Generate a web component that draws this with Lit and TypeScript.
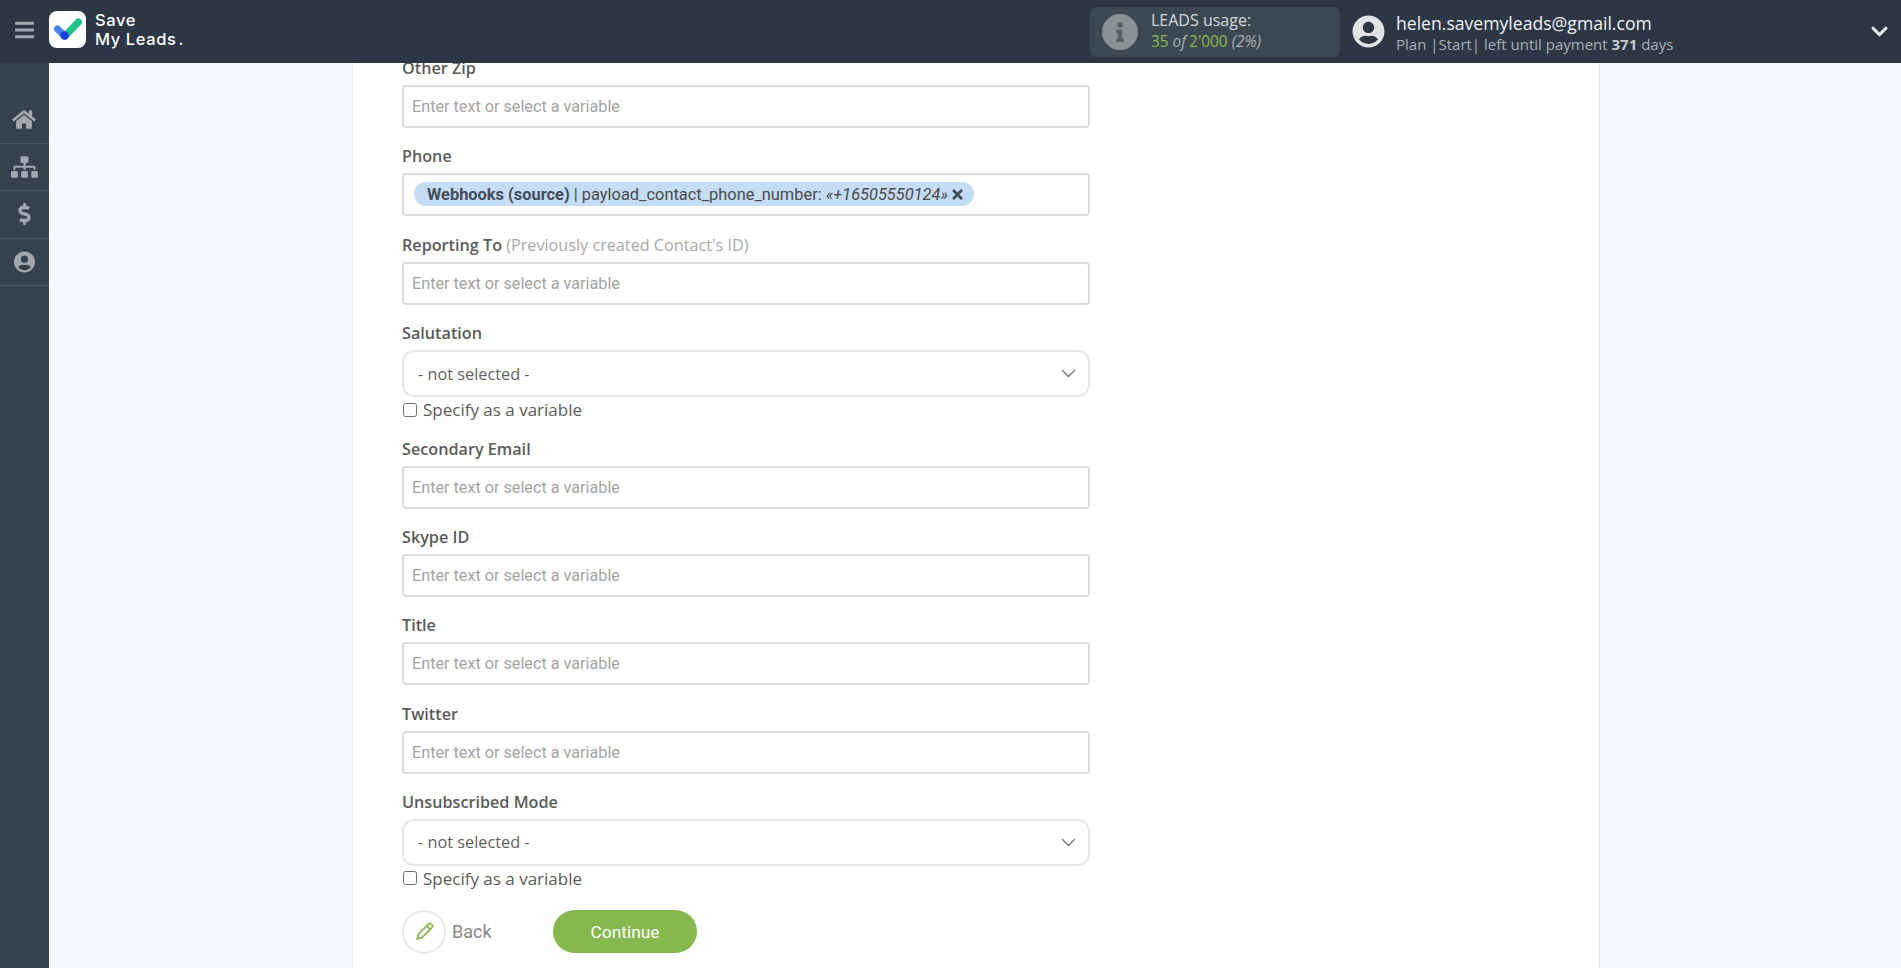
import { LitElement, html, css, svg } from "lit";
import { customElement } from "lit/decorators.js";

const icon = (vb: string, d: string, cls = "") =>
  html`<svg class=${cls} viewBox=${vb} fill="currentColor">${svg`<path d=${d}></path>`}</svg>`;

const HOME = "M280.37 148.26L96 300.11V464a16 16 0 0 0 16 16l112.06-.29a16 16 0 0 0 15.92-16V368a16 16 0 0 1 16-16h64a16 16 0 0 1 16 16v95.64a16 16 0 0 0 16 16.05L464 480a16 16 0 0 0 16-16V300L295.67 148.26a12.19 12.19 0 0 0-15.3 0zM571.6 251.47L488 182.56V44.05a12 12 0 0 0-12-12h-56a12 12 0 0 0-12 12v72.61L318.47 43a48 48 0 0 0-61 0L4.34 251.47a12 12 0 0 0-1.6 16.9l25.5 31A12 12 0 0 0 45.15 301l235.22-193.74a12.19 12.19 0 0 1 15.3 0L530.9 301a12 12 0 0 0 16.9-1.6l25.5-31a12 12 0 0 0-1.7-16.93z";
const SITEMAP = "M128 352H32c-17.67 0-32 14.33-32 32v96c0 17.67 14.33 32 32 32h96c17.67 0 32-14.33 32-32v-96c0-17.67-14.33-32-32-32zm-24-80h192v48h48v-48h192v48h48v-57.59c0-21.17-17.23-38.41-38.41-38.41H344v-64h40c17.67 0 32-14.33 32-32V32c0-17.67-14.33-32-32-32H256c-17.67 0-32 14.33-32 32v96c0 17.67 14.33 32 32 32h40v64H94.41C73.23 224 56 241.23 56 262.41V320h48v-48zm264 80h-96c-17.67 0-32 14.33-32 32v96c0 17.67 14.33 32 32 32h96c17.67 0 32-14.33 32-32v-96c0-17.67-14.33-32-32-32zm240 0h-96c-17.67 0-32 14.33-32 32v96c0 17.67 14.33 32 32 32h96c17.67 0 32-14.33 32-32v-96c0-17.67-14.33-32-32-32z";
const DOLLAR = "M209.2 233.4l-108-31.6C88.7 198.2 80 186.5 80 173.5c0-16.3 13.2-29.5 29.5-29.5h66.3c12.2 0 24.2 3.7 34.2 10.5 6.1 4.1 14.3 3.1 19.5-2l34.8-34c7.1-6.9 6.1-18.4-1.8-24.5C238 74.8 207.4 64.1 176 64V16c0-8.8-7.2-16-16-16h-32c-8.8 0-16 7.2-16 16v48h-2.5C45.8 64-5.4 118.7.5 183.6c4.2 46.1 39.4 83.6 83.8 96.6l102.5 30c12.5 3.7 21.2 15.3 21.2 28.3 0 16.3-13.2 29.5-29.5 29.5h-66.3C100 368 88 364.3 78 357.5c-6.1-4.1-14.3-3.1-19.5 2l-34.8 34c-7.1 6.9-6.1 18.4 1.8 24.5 24.5 19.2 55.1 29.9 86.5 30v48c0 8.8 7.2 16 16 16h32c8.8 0 16-7.2 16-16v-48.2c46.6-.9 90.3-28.6 105.7-72.7 21.5-61.6-14.6-124.8-72.5-141.7z";
const USER = "M248 8C111 8 0 119 0 256s111 248 248 248 248-111 248-248S385 8 248 8zm0 96c48.6 0 88 39.4 88 88s-39.4 88-88 88-88-39.4-88-88 39.4-88 88-88zm0 344c-58.7 0-111.3-26.6-146.5-68.2 18.8-35.4 55.6-59.8 98.5-59.8 2.4 0 4.8.4 7.1 1.1 13 4.2 26.6 6.9 40.9 6.9 14.3 0 28-2.7 40.9-6.9 2.3-.7 4.7-1.1 7.1-1.1 42.9 0 79.7 24.4 98.5 59.8C359.3 421.4 306.7 448 248 448z";
const BARS = "M16 132h416c8.837 0 16-7.163 16-16V76c0-8.837-7.163-16-16-16H16C7.163 60 0 67.163 0 76v40c0 8.837 7.163 16 16 16zm0 160h416c8.837 0 16-7.163 16-16v-40c0-8.837-7.163-16-16-16H16c-8.837 0-16 7.163-16 16v40c0 8.837 7.163 16 16 16zm0 160h416c8.837 0 16-7.163 16-16v-40c0-8.837-7.163-16-16-16H16c-8.837 0-16 7.163-16 16v40c0 8.837 7.163 16 16 16z";
const INFO = "M20 424.229h20V279.771H20c-11.046 0-20-8.954-20-20V212c0-11.046 8.954-20 20-20h112c11.046 0 20 8.954 20 20v212.229h20c11.046 0 20 8.954 20 20V492c0 11.046-8.954 20-20 20H20c-11.046 0-20-8.954-20-20v-47.771c0-11.046 8.954-20 20-20zM96 0C56.235 0 24 32.235 24 72s32.235 72 72 72 72-32.235 72-72S135.764 0 96 0z";
const CHEVRON = "M207.029 381.476L12.686 187.132c-9.373-9.373-9.373-24.569 0-33.941l22.667-22.667c9.357-9.357 24.522-9.375 33.901-.04L224 284.505l154.745-154.021c9.379-9.335 24.544-9.317 33.901.04l22.667 22.667c9.373 9.373 9.373 24.569 0 33.941L240.971 381.476c-9.373 9.372-24.569 9.372-33.942 0z";
const TIMES = "M242.72 256l100.07-100.07c12.28-12.28 12.28-32.19 0-44.48l-22.24-22.24c-12.28-12.28-32.19-12.28-44.48 0L176 189.28 75.93 89.21c-12.28-12.28-32.19-12.28-44.48 0L9.21 111.45c-12.28 12.28-12.28 32.19 0 44.48L109.28 256 9.21 356.07c-12.28 12.28-12.28 32.19 0 44.48l22.24 22.24c12.28 12.28 32.2 12.28 44.48 0L176 322.72l100.07 100.07c12.28 12.28 32.2 12.28 44.48 0l22.24-22.24c12.28-12.28 12.28-32.19 0-44.48L242.72 256z";

@customElement("app-root")
export class AppRoot extends LitElement {
  static styles = css`
    :host { display: flex; flex-direction: column; height: 968px; overflow: hidden; font-family: "Open Sans", sans-serif; background: #f4f7fc; color: #555; }
    svg { display: block; }
    .header { flex: 0 0 63px; background: #2c3645; display: flex; align-items: center; color: #fff; }
    .burger { width: 19px; height: 22px; margin: 0 0 3px 15px; color: #a3a8ae; }
    .logo { width: 37px; height: 37px; margin: 0 0 4px 15px; background: #fff; border-radius: 8px; display: flex; align-items: center; justify-content: center; }
    .brand { margin: 0 0 4px 9px; font-family: Inter, sans-serif; font-weight: 500; font-size: 16.5px; line-height: 19px; letter-spacing: 0.6px; }
    .brand span { margin-left: 2px; }
    .usage { margin-left: auto; width: 250px; height: 50px; box-sizing: border-box; background: #3b4852; border-radius: 6px; display: flex; align-items: center; padding-left: 12px; }
    .info { width: 36px; height: 36px; border-radius: 50%; background: #8b9296; color: #565e68; display: flex; align-items: center; justify-content: center; }
    .info svg { width: 10px; height: 20px; }
    .usage-text { margin-left: 13px; font-size: 16px; line-height: 21px; color: #d6d9dc; margin-bottom: 2px; }
    .usage-text .line2 { font-size: 15.4px; }
    .usage-text .num { color: #8ab84d; }
    .usage-text i { color: #a9afb5; }
    .usage-text .of { margin-right: 3px; }
    .user { margin-left: 12px; display: flex; align-items: center; width: 549px; }
    .avatar { width: 33px; height: 33px; color: #e2e3e4; }
    .user-text { margin-left: 11px; }
    .email { font-size: 17.6px; line-height: 24px; color: #f0f1f2; margin-top: 1px; }
    .plan { font-size: 15px; line-height: 18px; color: #a9afb5; }
    .plan b { color: #c8cbce; font-weight: 700; }
    .caret { width: 17px; height: 19px; margin-left: auto; margin-right: 13px; color: #e2e4e6; }
    .body { flex: 1; display: flex; min-height: 0; }
    .side { flex: 0 0 49px; background: #364150; padding-top: 33px; box-sizing: border-box; color: #a3a8ae; }
    .side .item { height: 47.5px; box-sizing: border-box; border-bottom: 1px solid #4a5564; padding-right: 1px; display: flex; align-items: center; justify-content: center; }
    .side .home { width: 24px; height: 21px; }
    .side .map { width: 27px; height: 22px; }
    .side .usd { width: 13px; height: 22px; }
    .side .usr { width: 21px; height: 22px; }
    .main { flex: 1; min-width: 0; overflow: hidden; padding-left: 303px; padding-right: 301px; }
    .card { background: #fff; border-left: 1px solid #e8edf3; border-right: 1px solid #e3e8ef; height: 100%; box-sizing: border-box; padding-left: 49px; overflow: hidden; }
    .form { width: 688px; margin-top: -7px; }
    .field { margin-bottom: 16.35px; }
    label.lbl { display: block; font-size: 16.2px; font-weight: 600; line-height: 24px; margin-bottom: 5px; color: #5a5a5a; }
    label.lbl span { font-weight: 400; color: #a8a8a8; }
    .input { height: 43px; box-sizing: border-box; border: 2px solid #dcdcdc; border-radius: 4px; background: #fff; display: flex; align-items: center; padding-left: 8px; font-family: Roboto, sans-serif; font-size: 16.2px; color: #a3a3a3; }
    .chip { background: #c5dcf5; border-radius: 12px; height: 24px; display: inline-flex; align-items: center; padding: 0 11px 0 13px; margin: -1px 0 0 2px; color: #4a4a4a; white-space: nowrap; font-size: 16.4px; }
    .chip b { font-weight: 700; color: #444d5a; }
    .chip i { margin-left: 4px; }
    .chip svg { width: 11px; height: 15px; margin-left: 4px; color: #444d5a; }
    .select { height: 47px; box-sizing: border-box; border: 2px solid #e6e6e6; border-radius: 12px; background: #fff; display: flex; align-items: center; justify-content: space-between; padding: 0 12px 0 14px; font-size: 16.3px; color: #5f5f5f; }
    .select svg { width: 15px; height: 9px; color: #777; }
    .check { display: flex; align-items: center; height: 25px; font-size: 17px; font-weight: 500; color: #5a5a5a; }
    .box { width: 14px; height: 14px; box-sizing: border-box; border: 1.5px solid #6f6f6f; border-radius: 2.5px; margin: 0 6px 0 1px; background: #fff; }
    .sel-field { margin-bottom: 14.5px; }
    .actions { display: flex; align-items: center; margin-top: 19px; }
    .back-btn { display: flex; align-items: center; width: 151px; }
    .pen { width: 44px; height: 44px; box-sizing: border-box; border: 2px solid #e2ebe8; border-radius: 50%; display: flex; align-items: center; justify-content: center; color: #86b84f; }
    .pen svg { width: 21px; height: 21px; }
    .back { margin-left: 6px; font-family: Roboto, sans-serif; font-size: 18px; color: #888; }
    .continue { width: 144px; height: 43px; border-radius: 22px; background: #86b84f; color: #fff; font-family: Roboto, sans-serif; font-size: 17.4px; display: flex; align-items: center; justify-content: center; }
  `;

  private field(name: string, extra = "") {
    return html`<div class="field">
      <label class="lbl">${name}${extra ? html` <span>${extra}</span>` : ""}</label>
      <div class="input">Enter text or select a variable</div>
    </div>`;
  }

  private selectField(name: string) {
    return html`<div class="sel-field">
      <label class="lbl">${name}</label>
      <div class="select">- not selected -
        <svg viewBox="0 0 15 9" fill="none" stroke="currentColor" stroke-width="1.4"><path d="M1 1l6.5 6.5L14 1"></path></svg>
      </div>
      <div class="check"><span class="box"></span>Specify as a variable</div>
    </div>`;
  }

  render() {
    return html`
      <div class="header">
        ${icon("0 0 448 512", BARS, "burger")}
        <div class="logo">
          <svg width="29" height="24" viewBox="0 0 29 24">
            <path d="M13 17L25.5 4" stroke="#1fc48a" stroke-width="7" stroke-linecap="round" fill="none"></path>
            <path d="M4.5 11L12 18" stroke="#4a80f5" stroke-width="7" stroke-linecap="round" fill="none"></path>
            <circle cx="11.5" cy="17.5" r="4.2" fill="#1b3fd8"></circle>
          </svg>
        </div>
        <div class="brand">Save<br />My Leads<span>.</span></div>
        <div class="usage">
          <div class="info">${icon("0 0 192 512", INFO)}</div>
          <div class="usage-text">
            <div>LEADS usage:</div>
            <div class="line2"><span class="num">35</span> <i class="of">of</i><span class="num">2'000</span> <i>(2%)</i></div>
          </div>
        </div>
        <div class="user">
          ${icon("0 0 496 512", USER, "avatar")}
          <div class="user-text">
            <div class="email">helen.savemyleads@gmail.com</div>
            <div class="plan">Plan |Start| left until payment <b>371</b> days</div>
          </div>
          ${icon("0 0 448 512", CHEVRON, "caret")}
        </div>
      </div>
      <div class="body">
        <div class="side">
          <div class="item">${icon("0 0 576 512", HOME, "home")}</div>
          <div class="item">${icon("0 0 640 512", SITEMAP, "map")}</div>
          <div class="item">${icon("0 0 288 512", DOLLAR, "usd")}</div>
          <div class="item">${icon("0 0 496 512", USER, "usr")}</div>
        </div>
        <div class="main">
          <div class="card">
            <div class="form">
              ${this.field("Other Zip")}
              <div class="field">
                <label class="lbl">Phone</label>
                <div class="input">
                  <span class="chip"><b>Webhooks (source)</b>&nbsp;| payload_contact_phone_number: <i>«+16505550124»</i>${icon("0 0 352 512", TIMES)}</span>
                </div>
              </div>
              ${this.field("Reporting To", "(Previously created Contact's ID)")}
              ${this.selectField("Salutation")}
              ${this.field("Secondary Email")}
              ${this.field("Skype ID")}
              ${this.field("Title")}
              ${this.field("Twitter")}
              ${this.selectField("Unsubscribed Mode")}
              <div class="actions">
                <div class="back-btn">
                  <div class="pen">
                    <svg viewBox="0 0 24 24" fill="none" stroke="currentColor" stroke-width="2" stroke-linejoin="round"><path d="M3.5 20.5l1.6-5.6L16.8 3.2a1.8 1.8 0 0 1 2.5 0l1.5 1.5a1.8 1.8 0 0 1 0 2.5L9.1 18.9l-5.6 1.6zM14.5 5.5l4 4"></path></svg>
                  </div>
                  <span class="back">Back</span>
                </div>
                <div class="continue">Continue</div>
              </div>
            </div>
          </div>
        </div>
      </div>
    `;
  }
}
